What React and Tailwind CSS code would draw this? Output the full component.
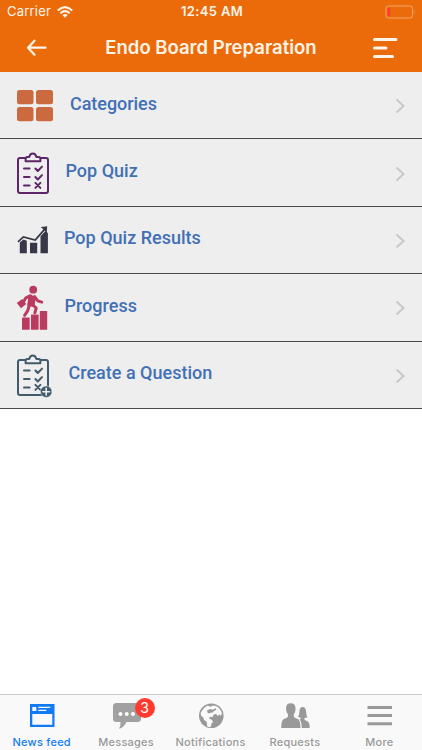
import clsx from "clsx";

const CategoriesIcon = () => (
  <svg viewBox="12 0 44 67" className="w-11 h-[67px]" fill="#cb6a3f">
    <rect x="17" y="18" width="16.5" height="14.3" rx="2.5" />
    <rect x="36" y="18" width="17" height="14.3" rx="2.5" />
    <rect x="17" y="35" width="16.5" height="14.3" rx="2.5" />
    <rect x="36" y="35" width="17" height="14.3" rx="2.5" />
  </svg>
);

const ClipboardIcon = ({ color, plus }) => (
  <svg
    viewBox="12 -0.7 44 67"
    className="w-11 h-[67px]"
    fill="none"
    stroke={color}
    strokeWidth="2"
    strokeLinecap="round"
    strokeLinejoin="round"
  >
    <rect x="18" y="18.4" width="30" height="34.8" rx="2" />
    <path
      d="M25.6 21.6v-2.4q0-1.8 1.8-1.8h1.8q.8-3.6 3.6-3.6t3.6 3.6h2.2q1.8 0 1.8 1.8v2.4z"
      fill="#eeeeee"
    />
    <path d="M24 28.8h5.6M24 37.3h5.6M24 45.8h5.6" />
    <path d="M35.4 28.8l2.4 2.5 4.2-4.4M35.4 37.3l2.4 2.5 4.2-4.4" />
    <path d="M35.4 43.2l5 5M40.4 43.2l-5 5" />
    {plus && (
      <g>
        <circle cx="46.2" cy="50" r="5.8" fill={color} stroke="#eeeeee" strokeWidth="0.5" />
        <path d="M42.9 50h6.6M46.2 46.7v6.6" stroke="#eeeeee" strokeWidth="1.6" />
      </g>
    )}
  </svg>
);

const ResultsIcon = () => (
  <svg viewBox="12 -0.5 44 67" className="w-11 h-[67px]" fill="#383747">
    <path d="M19.8 46.7V36l3.7-2.9 3.3 1.2v12.4zM30 46.7V36.2h7.2v10.5zM40.5 46.7V29.8l5-5.2 2.4 2v20.1z" />
    <path d="M18 35.4l5.4-5 11.8 3.2L45 22.4" fill="none" stroke="#383747" strokeWidth="1.8" />
    <path d="M40.8 20.5l6.4-.7-.4 6.4z" />
  </svg>
);

const ProgressIcon = () => (
  <svg viewBox="12 -0.7 44 67" className="w-11 h-[67px]" fill="#bb3a60">
    <circle cx="33.2" cy="15" r="3.9" />
    <path d="M16.8 28.2l5.4-3.8 4 5-5.2 4.2z" />
    <path d="M29.7 21.3l5.2 1-1.6 8.7-5-.6z" stroke="#bb3a60" strokeWidth="2.2" strokeLinejoin="round" />
    <path
      d="M30.4 21l-4.8 2.4-2.2 4M34.6 21.9l3.2 4.3 4 1.2M29.4 30.5l-1.8 5.7-3 4.4M32.5 30l3.7 3.3-1.3 4.8"
      fill="none"
      stroke="#bb3a60"
      strokeWidth="3"
      strokeLinecap="round"
      strokeLinejoin="round"
    />
    <rect x="22" y="42.7" width="7.7" height="12.4" rx=".6" />
    <rect x="31" y="39.9" width="7.6" height="15.2" rx=".6" />
    <rect x="39.8" y="36.2" width="7.4" height="18.9" rx=".6" />
  </svg>
);

const menuItems = [
  { label: "Categories", icon: <CategoriesIcon />, style: "pl-3.5 tracking-[-0.05px]" },
  { label: "Pop Quiz", icon: <ClipboardIcon color="#5d2668" />, style: "pl-[9.5px]" },
  { label: "Pop Quiz Results", icon: <ResultsIcon />, style: "pl-2" },
  { label: "Progress", icon: <ProgressIcon />, style: "pl-[8.5px]" },
  { label: "Create a Question", icon: <ClipboardIcon color="#425b6b" plus />, style: "pl-[12.5px]" },
];

const NewsIcon = () => (
  <svg viewBox="0 0 32 28" className="w-8 h-7">
    <path
      fillRule="evenodd"
      fill="#117bf7"
      d="M4 2h24.5v23H4zM6.3 12v10.7h20V12zM6.3 5v4h4V5zM12.3 4.8v1.2h12V4.8zM12.3 7.8v1.2h8V7.8z"
    />
  </svg>
);

const MessagesIcon = () => (
  <svg viewBox="0 0 32 28" className="w-8 h-7">
    <path
      fill="#a1a1a1"
      d="M5.5 1h21Q30 1 30 4.5v12Q30 20 26.5 20H15.5Q13 25.5 8 26.8q1.7-2.5 1.5-6.8h-4Q2 20 2 16.5v-12Q2 1 5.5 1z"
    />
    <g fill="white">
      <circle cx="9.5" cy="12" r="2" />
      <circle cx="15.7" cy="12" r="2" />
      <circle cx="22" cy="12" r="2" />
    </g>
  </svg>
);

const GlobeIcon = () => (
  <svg viewBox="0 0 32 28" className="w-8 h-7">
    <circle cx="16.3" cy="13.8" r="12.3" fill="#999999" />
    <path
      fill="#f9f9f9"
      d="M7.2 8.2Q9.5 4.8 13 3.6l2 1.2 3-1.3 3 .6q4.6 2.4 6 7.4l-1.2 2.2-1.6-1.3-1.4 1.6-1.7-2-2.3.4-1.4 2.8-2.8-.5-.4 1.7 2.2 1.2 1.9 2.2-2 1.9-.3 2.8-1.7.8-2.2-1-.4-4.6-2.6-1.7-.8-2.5-2.1-1.8-.6-2.4z"
    />
    <path fill="#999999" d="M12.3 8.2l3.2-1.3 2 .9 3.4-1.6.4 1.6-2.8 1.4-.8 1.6-2-.4-1.8 1.1-1.7-1.3z" />
  </svg>
);

const RequestsIcon = () => (
  <svg viewBox="0 0 32 28" className="w-8 h-7" fill="#999999">
    <path d="M11.7 1.3q4.7 0 4.9 5.3-.1 4-1.8 5.8v2.2q.5 1.3 3.5 2.2 3.2 1 3.2 9.2H2.2q0-8.2 3.2-9.2 3.4-.9 3.6-2.2v-2.2Q7.1 10.5 7 6.6q0-5.3 4.7-5.3z" />
    <path d="M19 14.8q1.4-2 1.4-5Q20.5 5 23.5 5q3.4 0 3.6 5 0 2.7 1.3 5-1.2 1-3 1v1.5q.4.8 2.8 1.7 2.6.9 2.6 6.8h-8q-.2-6.8-2.3-8.5l1.5-1v-.6q-1.3 0-3-1.1z" />
  </svg>
);

const MoreIcon = () => (
  <svg viewBox="0 0 32 28" className="w-8 h-7">
    <path d="M3.5 5.4H28M3.5 13.5H28M3.5 21.8H28" stroke="#999999" strokeWidth="3" />
  </svg>
);

const tabs = [
  { label: "News feed", icon: <NewsIcon />, active: true },
  { label: "Messages", icon: <MessagesIcon />, badge: 3 },
  { label: "Notifications", icon: <GlobeIcon /> },
  { label: "Requests", icon: <RequestsIcon /> },
  { label: "More", icon: <MoreIcon /> },
];

const Header = () => (
  <header className="h-[72px] shrink-0 bg-[#eb6b0b] text-[#fff4e8]">
    <div className="grid grid-cols-3 items-center h-6 pl-[7px] pr-1.5">
      <div className="flex items-center gap-[6px] text-[13px] tracking-[0.2px]">
        <span>Carrier</span>
        <svg viewBox="0 0 16 12" className="w-4 h-3" fill="none" stroke="currentColor" strokeWidth="2.1">
          <path d="M.8 4.4Q8-2.2 15.2 4.4M3.3 7.2q4.7-4.2 9.4 0" />
          <path d="M5.4 9.1q2.6-2.1 5.2 0L8 11.8z" fill="currentColor" stroke="none" />
        </svg>
      </div>
      <span className="text-center text-[13px] font-semibold tracking-[0.35px] pl-px">12:45 AM</span>
      <svg viewBox="0 0 31 14" className="w-[31px] h-3.5 justify-self-end">
        <rect x="1" y="1" width="26.5" height="12" rx="2.5" fill="none" stroke="#f5a56b" />
        <rect x="2.7" y="2.8" width="2.6" height="8.4" rx=".7" fill="#ff3b30" />
        <path d="M29 5q1.5 2 0 4z" fill="#f5a56b" />
      </svg>
    </div>
    <div className="flex items-center justify-between h-12 pl-[26px] pr-6">
      <svg
        viewBox="0 0 22 20"
        className="w-[22px] h-5"
        fill="none"
        stroke="currentColor"
        strokeWidth="2.2"
        strokeLinecap="round"
        strokeLinejoin="round"
      >
        <path d="M19.5 9.7H2M8.5 2.7L2 9.7l6.5 7" />
      </svg>
      <h1 className="text-[18.5px] font-semibold whitespace-nowrap pl-0.5">
        Endo Board Preparation
      </h1>
      <svg
        viewBox="0 0 26 24"
        className="w-[26px] h-6"
        fill="none"
        stroke="currentColor"
        strokeWidth="3"
        strokeLinecap="round"
      >
        <path d="M2.5 3.4h21.5M2.5 11.9h11.5M2.5 20.4h18" />
      </svg>
    </div>
  </header>
);

const App = () => {
  return (
    <div className="flex flex-col h-screen bg-white overflow-hidden font-['Inter',sans-serif]">
      <Header />

      <ul className="flex-1">
        {menuItems.map((item) => (
          <li
            key={item.label}
            className="flex items-center h-[67.4px] pl-3 pr-4 bg-[#eeeeee] border-b border-[#4a4a4a]"
          >
            {item.icon}
            <span
              className={clsx(
                "flex-1 pb-[3px] text-[18px] leading-6 font-medium text-[#4270b5] font-['Roboto',sans-serif]",
                item.style
              )}
            >
              {item.label}
            </span>
            <svg
              viewBox="0 0 11 16"
              className="w-[11px] h-4 mt-0.5"
              fill="none"
              stroke="#c7c7cc"
              strokeWidth="2"
            >
              <path d="M1.5 1.5L8.5 8l-7 6.5" />
            </svg>
          </li>
        ))}
      </ul>

      <nav className="flex h-14 shrink-0 bg-[#f9f9f9] border-t border-[#c9c9c9]">
        {tabs.map((tab) => (
          <div
            key={tab.label}
            className={clsx(
              "flex flex-1 flex-col items-center pt-[7px]",
              tab.active ? "text-[#117bf7]" : "text-[#999999]"
            )}
          >
            <div className="relative">
              {tab.icon}
              {tab.badge && (
                <span className="absolute -top-1 left-6 flex items-center justify-center w-5 h-5 rounded-full bg-[#ff3b30] text-white text-sm">
                  {tab.badge}
                </span>
              )}
            </div>
            <span className="mt-[5px] pr-px text-[11px] leading-[14px] font-medium tracking-[0.25px] whitespace-nowrap">
              {tab.label}
            </span>
          </div>
        ))}
      </nav>
    </div>
  );
};

export default App;
